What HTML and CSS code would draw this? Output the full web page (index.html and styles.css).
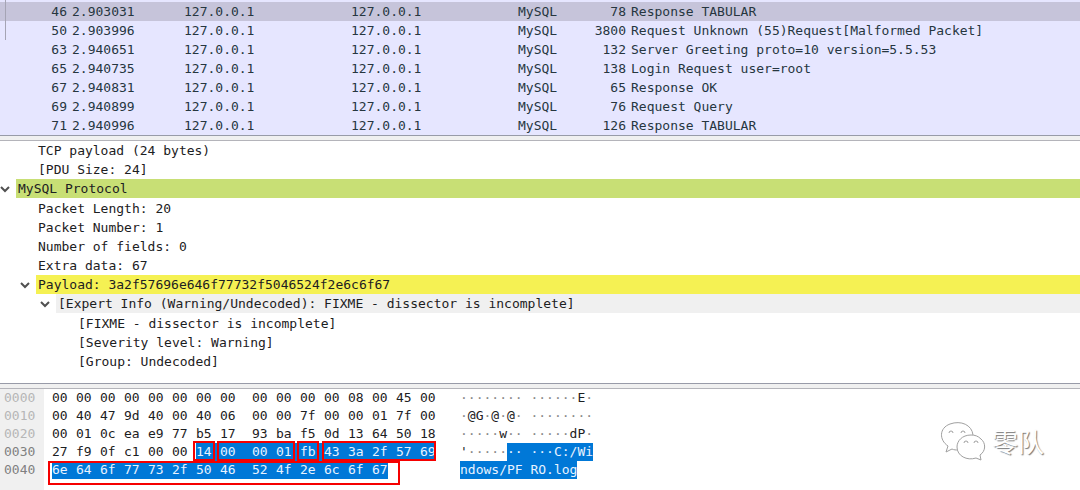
FILE: index.html
```html
<!DOCTYPE html>
<html lang="en">
<head>
<meta charset="utf-8">
<title>Packet capture</title>
<link rel="stylesheet" href="styles.css">
</head>
<body>
<section class="packets">
  <span class="related"></span>
  <table class="list">
    <colgroup><col class="c-no"><col class="c-time"><col class="c-addr"><col class="c-addr"><col class="c-proto"><col class="c-len"><col></colgroup>
    <tbody>
      <tr class="current"><td class="num">46</td><td>2.903031</td><td>127.0.0.1</td><td>127.0.0.1</td><td>MySQL</td><td class="num">78</td><td>Response TABULAR</td></tr>
      <tr><td class="num">50</td><td>2.903996</td><td>127.0.0.1</td><td>127.0.0.1</td><td>MySQL</td><td class="num">3800</td><td>Request Unknown (55)Request[Malformed Packet]</td></tr>
      <tr><td class="num">63</td><td>2.940651</td><td>127.0.0.1</td><td>127.0.0.1</td><td>MySQL</td><td class="num">132</td><td>Server Greeting proto=10 version=5.5.53</td></tr>
      <tr><td class="num">65</td><td>2.940735</td><td>127.0.0.1</td><td>127.0.0.1</td><td>MySQL</td><td class="num">138</td><td>Login Request user=root</td></tr>
      <tr><td class="num">67</td><td>2.940831</td><td>127.0.0.1</td><td>127.0.0.1</td><td>MySQL</td><td class="num">65</td><td>Response OK</td></tr>
      <tr><td class="num">69</td><td>2.940899</td><td>127.0.0.1</td><td>127.0.0.1</td><td>MySQL</td><td class="num">76</td><td>Request Query</td></tr>
      <tr><td class="num">71</td><td>2.940996</td><td>127.0.0.1</td><td>127.0.0.1</td><td>MySQL</td><td class="num">126</td><td>Response TABULAR</td></tr>
    </tbody>
  </table>
</section>
<div class="splitter"></div>
<section class="details">
  <ul class="tree">
    <li>
      <ul class="branch tight">
        <li class="leaf">TCP payload (24 bytes)</li>
        <li class="leaf">[PDU Size: 24]</li>
      </ul>
    </li>
    <li>
      <div class="node">
        <button class="toggle" aria-label="Collapse MySQL Protocol"><svg viewBox="0 0 10 10"><path d="M1 3l4 4 4-4"/></svg></button>
        <span class="label proto">MySQL Protocol</span>
      </div>
      <ul class="branch">
        <li class="leaf">Packet Length: 20</li>
        <li class="leaf">Packet Number: 1</li>
        <li class="leaf">Number of fields: 0</li>
        <li class="leaf">Extra data: 67</li>
        <li>
          <div class="node">
            <button class="toggle" aria-label="Collapse Payload"><svg viewBox="0 0 10 10"><path d="M1 3l4 4 4-4"/></svg></button>
            <span class="label warn">Payload: 3a2f57696e646f77732f5046524f2e6c6f67</span>
          </div>
          <ul class="branch tight">
            <li>
              <div class="node">
                <button class="toggle" aria-label="Collapse Expert Info"><svg viewBox="0 0 10 10"><path d="M1 3l4 4 4-4"/></svg></button>
                <span class="label info">[Expert Info (Warning/Undecoded): FIXME - dissector is incomplete]</span>
              </div>
              <ul class="branch">
                <li class="leaf">[FIXME - dissector is incomplete]</li>
                <li class="leaf">[Severity level: Warning]</li>
                <li class="leaf">[Group: Undecoded]</li>
              </ul>
            </li>
          </ul>
        </li>
      </ul>
    </li>
  </ul>
</section>
<div class="splitter"></div>
<section class="dump">
  <div class="offsets">
    <div>0000</div><div>0010</div><div>0020</div><div class="active">0030</div><div class="active">0040</div>
  </div>
  <div class="bytes">
    <div><b>00 </b><b>00 </b><b>00 </b><b>00 </b><b>00 </b><b>00 </b><b>00 </b><b class="mid">00  </b><b>00 </b><b>00 </b><b>00 </b><b>00 </b><b>08 </b><b>00 </b><b>45 </b><b class="end">00</b></div>
    <div><b>00 </b><b>40 </b><b>47 </b><b>9d </b><b>40 </b><b>00 </b><b>40 </b><b class="mid">06  </b><b>00 </b><b>00 </b><b>7f </b><b>00 </b><b>00 </b><b>01 </b><b>7f </b><b class="end">00</b></div>
    <div><b>00 </b><b>01 </b><b>0c </b><b>ea </b><b>e9 </b><b>77 </b><b>b5 </b><b class="mid">17  </b><b>93 </b><b>ba </b><b>f5 </b><b>0d </b><b>13 </b><b>64 </b><b>50 </b><b class="end">18</b></div>
    <div><b>27 </b><b>f9 </b><b>0f </b><b>c1 </b><b>00 </b><b>00 </b><span class="sel mark"><b>14 </b></span><span class="sel mark"><b class="mid">00  </b><b>00 </b><b>01 </b></span><span class="sel mark"><b>fb </b></span><span class="sel mark last"><b>43 </b><b>3a </b><b>2f </b><b>57 </b><b class="end">69</b></span></div>
    <div><span class="sel mark wide"><b>6e </b><b>64 </b><b>6f </b><b>77 </b><b>73 </b><b>2f </b><b>50 </b><b class="mid">46  </b><b>52 </b><b>4f </b><b>2e </b><b>6c </b><b>6f </b><b class="end">67</b></span></div>
  </div>
  <div class="ascii">
    <div><i>········ ······</i>E<i>·</i></div>
    <div><i>·</i>@G<i>·</i>@<i>·</i>@<i>· ········</i></div>
    <div><i>·····</i>w<i>·· ·····</i>dP<i>·</i></div>
    <div>'<i>·····</i><span class="sel">·· ···C:/Wi</span></div>
    <div><span class="sel">ndows/PF RO.log</span></div>
  </div>
  <div class="watermark">
    <svg viewBox="0 0 46 40">
      <path d="M8 25C-1 19-1 7 10 3c11-4 22 1 23 11M8 25l-2 6 6-3c2 1 4 1 6 1"/>
      <path d="M31 14c-9 0-14 6-14 12 0 9 10 14 19 11l5 2-1-5c6-4 6-12 1-16-3-3-6-4-10-4z"/>
      <path d="M9 12a2 2 0 1 1 4 0M21 12a2 2 0 1 1 4 0M24 22a2 2 0 1 1 4 0M34 22a2 2 0 1 1 4 0"/>
    </svg>
    <span>零队</span>
  </div>
</section>
</body>
</html>
```
FILE: styles.css
```css
* { box-sizing: border-box; }

body {
  margin: 0;
  min-height: 100vh;
  display: flex;
  flex-direction: column;
  background: #fff;
  color: #1c2022;
  font-family: "DejaVu Sans Mono", "Liberation Mono", monospace;
  font-size: 13px;
  line-height: 19px;
}

/* Packet list */
.packets {
  position: relative;
  padding-top: 2px;
  background: #e6e6ff;
  color: #26363f;
}
.related {
  position: absolute;
  left: 5px;
  top: 0;
  width: 1px;
  height: 40px;
  background: #a5a4b4;
}
.list {
  width: 100%;
  table-layout: fixed;
  border-collapse: collapse;
}
.list td { padding: 0 0 0 4px; white-space: nowrap; }
.list .num { padding: 0 1px 0 0; text-align: right; }
.list .current { background: #c6c4da; }
.c-no { width: 68px; }
.c-time { width: 112px; }
.c-addr { width: 167px; }
.c-proto { width: 80px; }
.c-len { width: 33px; }

.splitter {
  height: 6px;
  background: #f0f0f0;
  border-top: 1px solid #989ba8;
  border-bottom: 1px solid #b4b4ba;
}

/* Protocol tree */
.details { padding-bottom: 12px; }
.tree, .branch { margin: 0; padding: 0; list-style: none; }
.branch { padding: 1px 0 0 20px; }
.tight { padding-top: 0; }
.leaf { padding-left: 18px; white-space: nowrap; }
.node { display: flex; }
.toggle {
  flex: none;
  width: 16px;
  padding: 0;
  border: 0;
  background: none;
  display: flex;
  align-items: center;
}
.toggle svg {
  width: 10px;
  height: 10px;
  fill: none;
  stroke: #505050;
  stroke-width: 2;
}
.label { flex: 1; padding-left: 2px; white-space: nowrap; }
.proto { background: #c8df75; }
.warn { background: #f5f153; }
.info { background: #f0f0f0; }

/* Byte view */
.dump {
  position: relative;
  flex: 1;
  display: flex;
  line-height: 18px;
}
.offsets {
  width: 44px;
  padding-left: 4px;
  background: #f0f0f0;
  color: #b6b6b6;
}
.active { color: #808080; }
.bytes { padding-left: 8px; width: 416px; }
.bytes > div { display: flex; }
.bytes b {
  flex: none;
  width: 24px;
  font-weight: normal;
  white-space: pre;
}
.bytes .mid { width: 32px; }
.bytes .end { width: 16px; }
.ascii { white-space: nowrap; }
.ascii i { font-style: normal; color: #8a8a8a; }
.sel {
  display: inline-block;
  background: #0078d7;
  color: #e8f3ff;
}
.mark { position: relative; display: flex; }
.mark::after {
  content: "";
  position: absolute;
  inset: -2px 5px 0 -3px;
  border: 2px solid #f50000;
}
.last::after { inset: -2px 0 0 -2px; }
.wide::after { inset: 0 -12px -6px -4px; }

.watermark {
  position: absolute;
  right: 36px;
  top: 28px;
  display: flex;
  align-items: center;
  gap: 6px;
  color: #fff;
  font-family: "Noto Sans CJK SC", sans-serif;
  font-size: 26px;
  line-height: 48px;
  text-shadow: 1px 1px 1px #777;
}
.watermark svg {
  width: 46px;
  height: 40px;
  fill: #fff;
  stroke: #a0a0a0;
  stroke-width: 1;
}
```
